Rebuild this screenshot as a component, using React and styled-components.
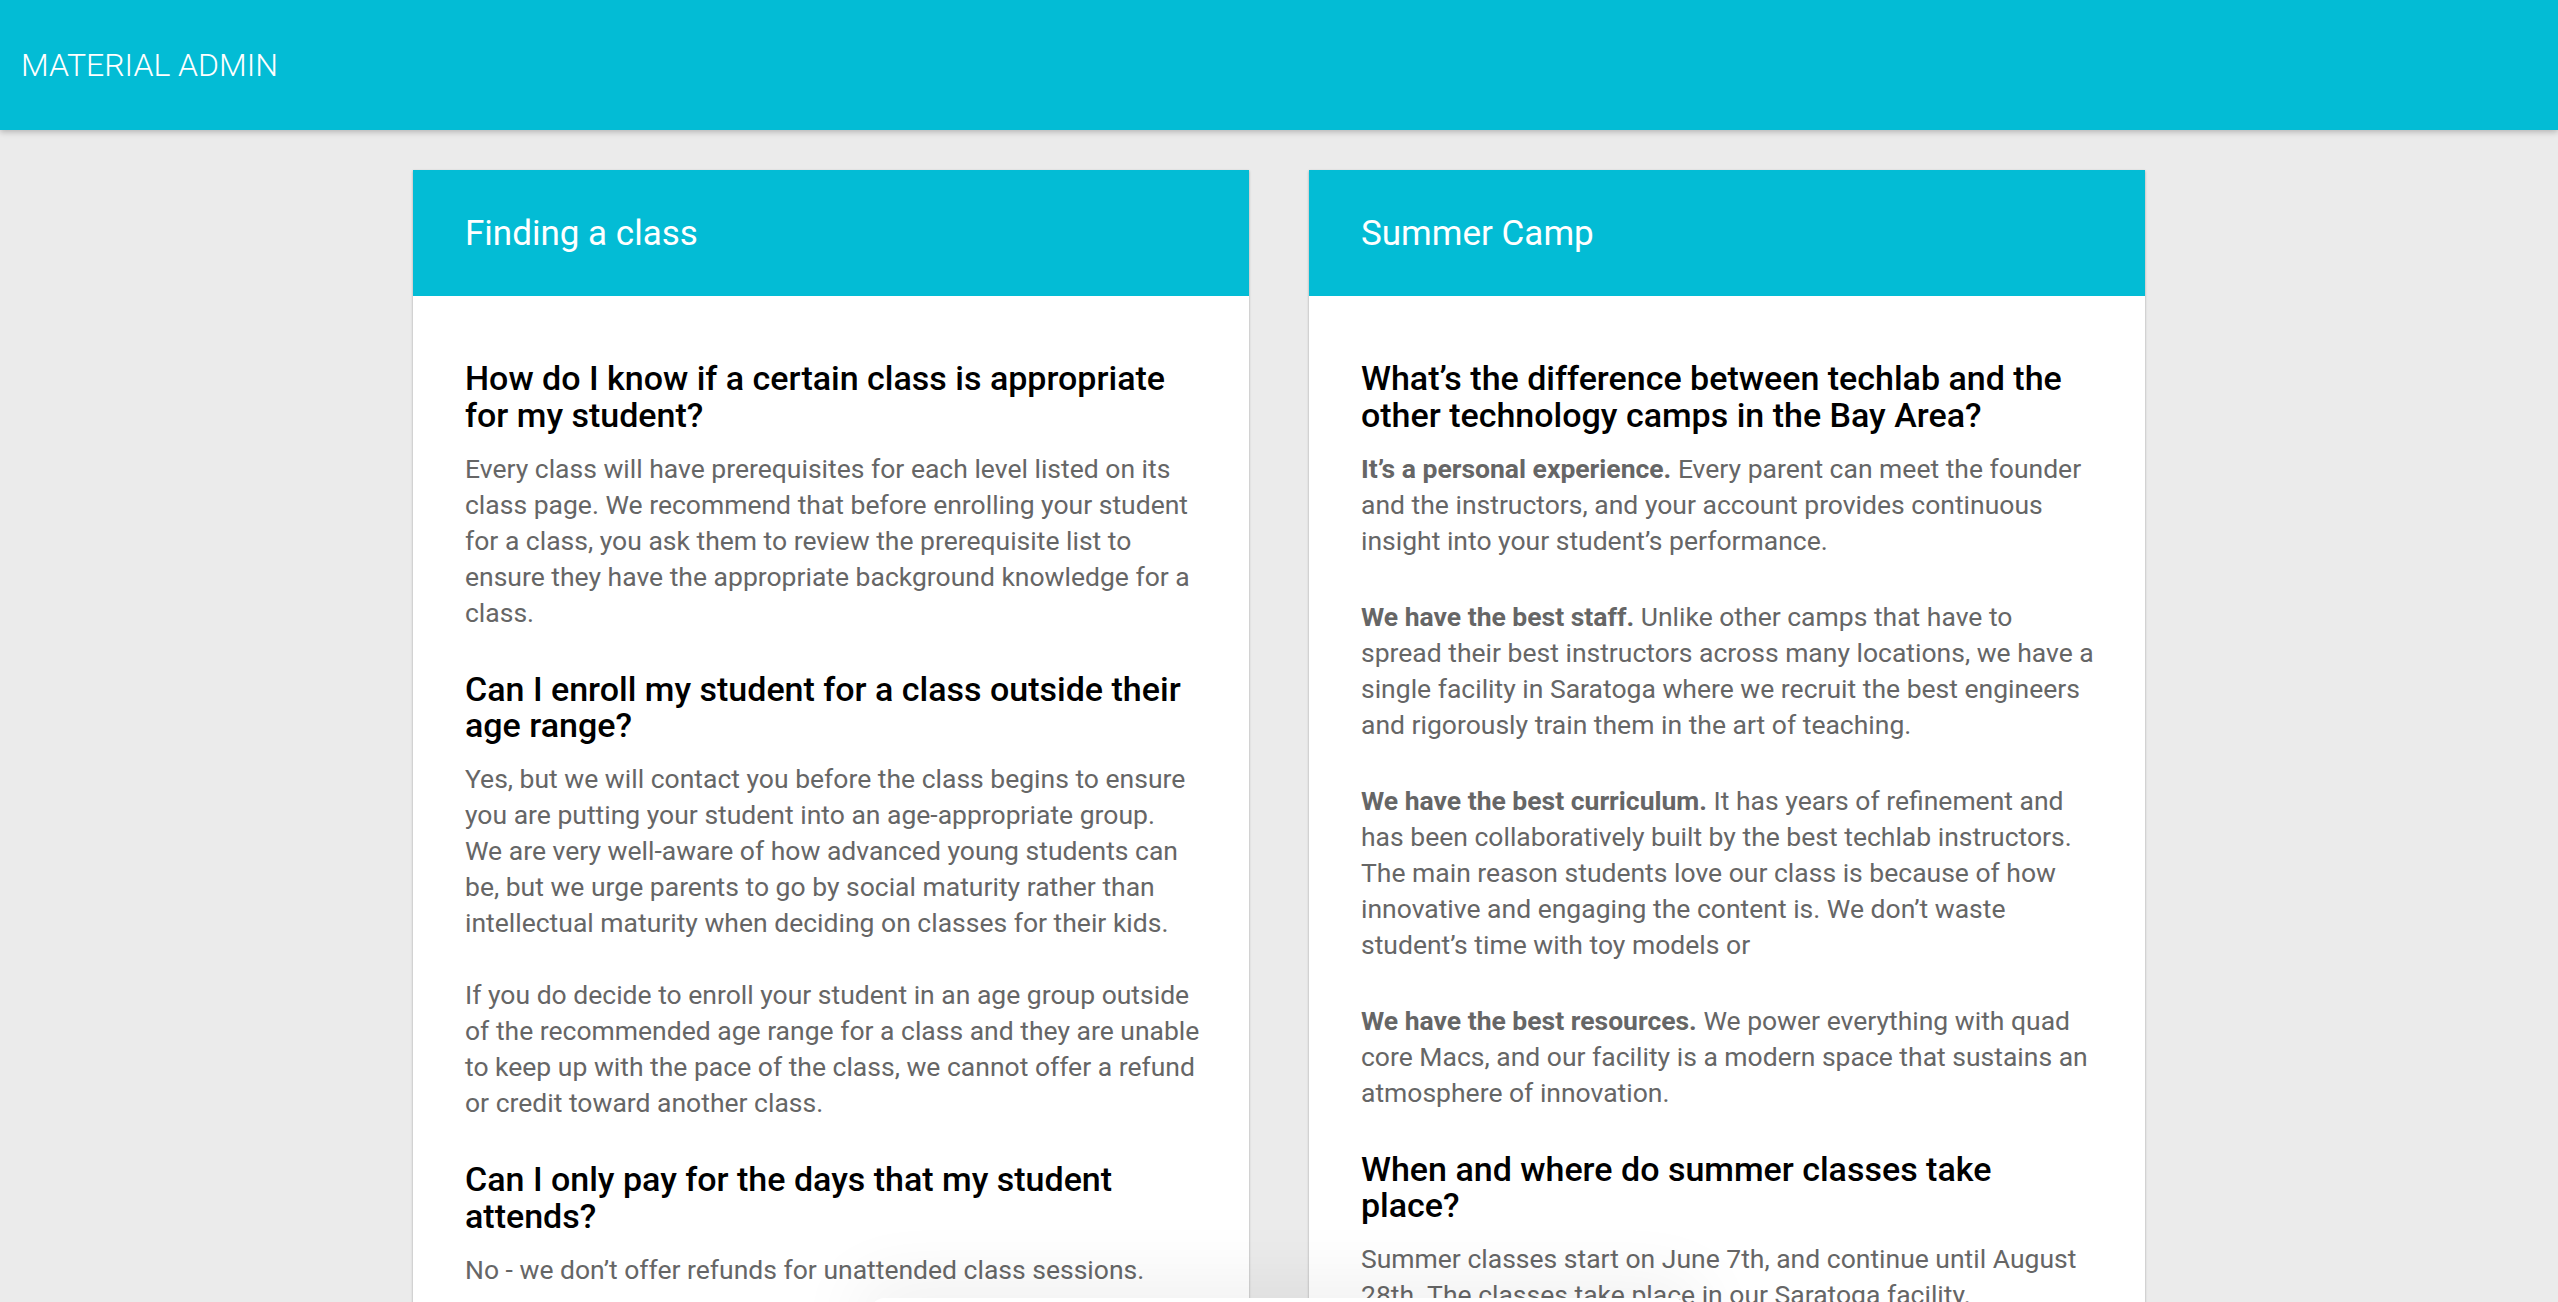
import React from "react";
import styled, { createGlobalStyle } from "styled-components";

const GlobalStyle = createGlobalStyle`
  html, body {
    margin: 0;
    padding: 0;
    background: #ebebeb;
    font-family: Roboto, "Noto Sans", "Liberation Sans", sans-serif;
    overflow: hidden;
  }
  * { box-sizing: border-box; }
`;

const Page = styled.div`
  min-height: 100vh;
  background: #ebebeb;
`;

const TopBar = styled.header`
  height: 130px;
  background: #03bcd5;
  display: flex;
  align-items: center;
  padding-left: 21px;
  box-shadow: 0 2px 6px rgba(0, 0, 0, 0.24);
  position: relative;
  z-index: 2;
`;

const Brand = styled.h1`
  margin: 0;
  color: #fff;
  font-weight: 300;
  font-size: 32px;
`;

const Columns = styled.main`
  display: flex;
  justify-content: center;
  align-items: flex-start;
  gap: 60px;
  padding-top: 40px;
`;

const Card = styled.section`
  width: 836px;
  background: #fff;
  box-shadow: 0 1px 3px rgba(0, 0, 0, 0.12), 0 1px 2px rgba(0, 0, 0, 0.2);
`;

const CardHeader = styled.div`
  height: 126px;
  background: #03bcd5;
  display: flex;
  align-items: center;
  padding: 0 52px;
`;

const CardTitle = styled.h2`
  margin: 0;
  color: #fff;
  font-weight: 400;
  font-size: 35px;
`;

const CardBody = styled.div`
  padding: 64px 36px 60px 52px;
`;

const Question = styled.h3`
  margin: ${(p) => (p.$first ? 0 : 40)}px 0 17px;
  max-width: 732px;
  font-size: 34px;
  line-height: 36.8px;
  font-weight: 500;
  color: #000;
`;

const Answer = styled.p`
  margin: ${(p) => p.$space}px 0 0;
  font-size: 26.5px;
  line-height: 36px;
  color: #666;
  white-space: pre-line;
  strong {
    font-weight: 700;
  }
`;

const BottomGlow = styled.div`
  position: fixed;
  left: 50%;
  bottom: -30px;
  transform: translateX(-50%);
  width: 820px;
  height: 34px;
  background: #fff;
  border-radius: 16px;
  box-shadow: 0 0 70px 14px rgba(0, 0, 0, 0.07);
  z-index: 3;
`;

const faqLeft = [
  {
    q: "How do I know if a certain class is appropriate for my student?",
    a: [
      [null, "Every class will have prerequisites for each level listed on its\nclass page. We recommend that before enrolling your student\nfor a class, you ask them to review the prerequisite list to\nensure they have the appropriate background knowledge for a\nclass."],
    ],
  },
  {
    q: "Can I enroll my student for a class outside their age range?",
    a: [
      [null, "Yes, but we will contact you before the class begins to ensure\nyou are putting your student into an age-appropriate group.\nWe are very well-aware of how advanced young students can\nbe, but we urge parents to go by social maturity rather than\nintellectual maturity when deciding on classes for their kids."],
      [null, "If you do decide to enroll your student in an age group outside\nof the recommended age range for a class and they are unable\nto keep up with the pace of the class, we cannot offer a refund\nor credit toward another class."],
    ],
  },
  {
    q: "Can I only pay for the days that my student attends?",
    a: [[null, "No - we don\u2019t offer refunds for unattended class sessions."]],
  },
];

const faqRight = [
  {
    q: "What\u2019s the difference between techlab and the other technology camps in the Bay Area?",
    a: [
      ["It\u2019s a personal experience.", "Every parent can meet the founder\nand the instructors, and your account provides continuous\ninsight into your student\u2019s performance."],
      ["We have the best staff.", "Unlike other camps that have to\nspread their best instructors across many locations, we have a\nsingle facility in Saratoga where we recruit the best engineers\nand rigorously train them in the art of teaching."],
      ["We have the best curriculum.", "It has years of refinement and\nhas been collaboratively built by the best techlab instructors.\nThe main reason students love our class is because of how\ninnovative and engaging the content is. We don\u2019t waste\nstudent\u2019s time with toy models or"],
      ["We have the best resources.", "We power everything with quad\ncore Macs, and our facility is a modern space that sustains an\natmosphere of innovation."],
    ],
  },
  {
    q: "When and where do summer classes take place?",
    a: [[null, "Summer classes start on June 7th, and continue until August\n28th. The classes take place in our Saratoga facility."]],
  },
];

function FaqCard({ title, items, gap }) {
  return (
    <Card>
      <CardHeader>
        <CardTitle>{title}</CardTitle>
      </CardHeader>
      <CardBody>
        {items.map((item, qi) => (
          <React.Fragment key={item.q}>
            <Question $first={qi === 0}>{item.q}</Question>
            {item.a.map(([lead, text], i) => (
              <Answer key={i} $space={i === 0 ? 0 : gap}>
                {lead && <strong>{lead}</strong>}
                {lead ? " " : ""}
                {text}
              </Answer>
            ))}
          </React.Fragment>
        ))}
      </CardBody>
    </Card>
  );
}

export default function App() {
  return (
    <Page>
      <GlobalStyle />
      <TopBar>
        <Brand>MATERIAL ADMIN</Brand>
      </TopBar>
      <Columns>
        <FaqCard title="Finding a class" items={faqLeft} gap={36} />
        <FaqCard title="Summer Camp" items={faqRight} gap={40} />
      </Columns>
      <BottomGlow />
    </Page>
  );
}
